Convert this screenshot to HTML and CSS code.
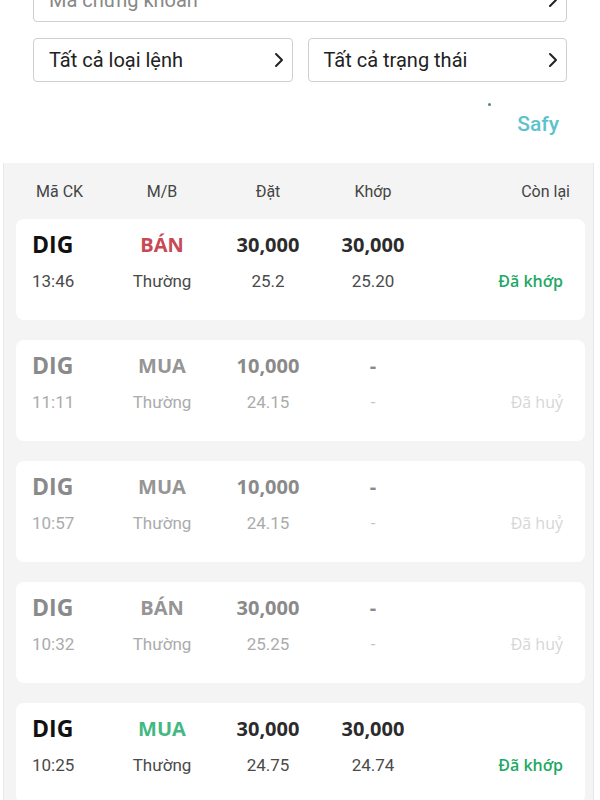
FILE: index.html
```html
<!DOCTYPE html>
<html lang="vi">
<head>
    <meta charset="UTF-8">
    <meta name="viewport" content="width=device-width, initial-scale=1.0">
    <title>Sổ lệnh</title>
    <link rel="stylesheet" href="styles.css">
</head>
<body>
    <div class="filters">
        <div class="select search">
            <span class="placeholder">Mã chứng khoán</span>
            <svg class="chev" width="10" height="16" viewBox="0 0 10 16"><polyline points="2,2 8,8 2,14" /></svg>
        </div>
        <div class="filter-row">
            <div class="select">
                <span>Tất cả loại lệnh</span>
                <svg class="chev" width="10" height="16" viewBox="0 0 10 16"><polyline points="2,2 8,8 2,14" /></svg>
            </div>
            <div class="select">
                <span>Tất cả trạng thái</span>
                <svg class="chev" width="10" height="16" viewBox="0 0 10 16"><polyline points="2,2 8,8 2,14" /></svg>
            </div>
        </div>
        <div class="brand">
            <span class="dot"></span>
            <span class="safy">Safy</span>
        </div>
    </div>

    <div class="panel">
        <div class="head">
            <span>Mã CK</span>
            <span class="c">M/B</span>
            <span class="c">Đặt</span>
            <span class="c">Khớp</span>
            <span class="r">Còn lại</span>
        </div>

        <div class="order">
            <div class="line top">
                <span class="sym">DIG</span>
                <span class="c side sell">BÁN</span>
                <span class="c">30,000</span>
                <span class="c">30,000</span>
                <span></span>
            </div>
            <div class="line sub">
                <span>13:46</span>
                <span class="c">Thường</span>
                <span class="c">25.2</span>
                <span class="c">25.20</span>
                <span class="r status done">Đã khớp</span>
            </div>
        </div>

        <div class="order off">
            <div class="line top">
                <span class="sym">DIG</span>
                <span class="c side">MUA</span>
                <span class="c">10,000</span>
                <span class="c">-</span>
                <span></span>
            </div>
            <div class="line sub">
                <span>11:11</span>
                <span class="c">Thường</span>
                <span class="c">24.15</span>
                <span class="c dash">-</span>
                <span class="r status">Đã huỷ</span>
            </div>
        </div>

        <div class="order off">
            <div class="line top">
                <span class="sym">DIG</span>
                <span class="c side">MUA</span>
                <span class="c">10,000</span>
                <span class="c">-</span>
                <span></span>
            </div>
            <div class="line sub">
                <span>10:57</span>
                <span class="c">Thường</span>
                <span class="c">24.15</span>
                <span class="c dash">-</span>
                <span class="r status">Đã huỷ</span>
            </div>
        </div>

        <div class="order off">
            <div class="line top">
                <span class="sym">DIG</span>
                <span class="c side">BÁN</span>
                <span class="c">30,000</span>
                <span class="c">-</span>
                <span></span>
            </div>
            <div class="line sub">
                <span>10:32</span>
                <span class="c">Thường</span>
                <span class="c">25.25</span>
                <span class="c dash">-</span>
                <span class="r status">Đã huỷ</span>
            </div>
        </div>

        <div class="order">
            <div class="line top">
                <span class="sym">DIG</span>
                <span class="c side buy">MUA</span>
                <span class="c">30,000</span>
                <span class="c">30,000</span>
                <span></span>
            </div>
            <div class="line sub">
                <span>10:25</span>
                <span class="c">Thường</span>
                <span class="c">24.75</span>
                <span class="c">24.74</span>
                <span class="r status done">Đã khớp</span>
            </div>
        </div>
    </div>
</body>
</html>
```

FILE: styles.css
```css
* {
    margin: 0;
    padding: 0;
    box-sizing: border-box;
}
body {
    background: #fff;
    font-family: Roboto, "Noto Sans", sans-serif;
    color: #222;
    overflow: hidden;
}
.filters {
    padding: 0 33px;
}
.select {
    display: flex;
    align-items: center;
    justify-content: space-between;
    height: 44px;
    padding: 0 8px 0 15px;
    border: 1px solid #cfcfcf;
    border-radius: 4px;
    font-size: 20px;
    color: #222;
    background: #fff;
}
.search {
    margin-top: -22px;
}
.search .placeholder {
    color: #888;
}
.chev {
    fill: none;
    stroke: #222;
    stroke-width: 2;
    stroke-linecap: round;
    stroke-linejoin: round;
}
.filter-row {
    display: grid;
    grid-template-columns: 1fr 1fr;
    gap: 15px;
    margin-top: 16px;
}
.brand {
    display: flex;
    justify-content: flex-end;
    align-items: center;
    height: 81px;
    padding-right: 8px;
    padding-top: 2px;
}
.dot {
    width: 3px;
    height: 3px;
    border-radius: 50%;
    background: #5a7f8a;
    margin-right: 26px;
    margin-bottom: 38px;
}
.safy {
    font-size: 21px;
    font-weight: 500;
    color: #5cc3cc;
}
.panel {
    background: #f4f4f4;
    margin: 0 6px 0 3px;
    border-left: 1px solid #e8e8e8;
    border-right: 1px solid #e8e8e8;
    padding: 0 8px 20px 12px;
    min-height: 640px;
}
.head,
.line {
    display: grid;
    grid-template-columns: 80px 100px 112px 98px 1fr;
    align-items: center;
}
.head {
    height: 56px;
    padding: 0 15px 0 20px;
    grid-template-columns: 76px 100px 112px 98px 1fr;
    font-size: 16px;
    color: #444;
}
.c {
    text-align: center;
}
.r {
    text-align: right;
}
.order {
    background: #fff;
    border-radius: 8px;
    height: 101px;
    margin-bottom: 20px;
    padding: 9px 22px 0 16px;
}
.top {
    height: 28px;
    font-family: "Open Sans", "Noto Sans", sans-serif;
    font-weight: 700;
    font-size: 20px;
    color: #2b2b2b;
}
.top .sym {
    font-size: 23px;
    color: #111;
}
.sell {
    color: #c84a55;
}
.buy {
    color: #43b883;
}
.sub {
    height: 24px;
    margin-top: 13px;
    font-size: 17px;
    color: #4a4a4a;
}
.status {
    font-family: "Open Sans", "Noto Sans", sans-serif;
    font-weight: 600;
    font-size: 16px;
}
.done {
    color: #22a866;
}
.off .top,
.off .top .sym {
    color: #8a8a8a;
}
.off .top .side {
    color: #959595;
}
.off .sub {
    color: #ababab;
}
.off .sub .dash {
    color: #c4c4c4;
}
.off .status {
    color: #d6d6d6;
    font-weight: 400;
}
```
